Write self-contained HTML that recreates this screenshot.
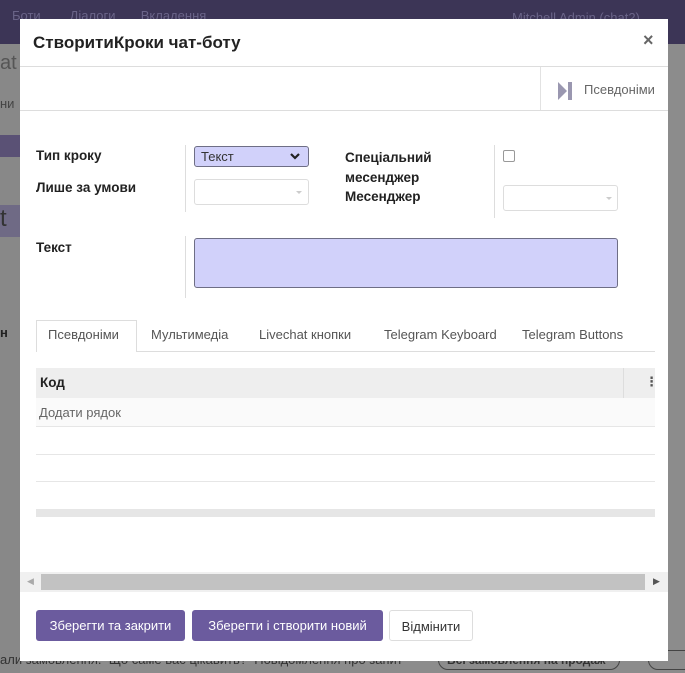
<!DOCTYPE html>
<html><head><meta charset="utf-8"><style>
*{box-sizing:border-box;margin:0;padding:0}
body{width:685px;height:673px;overflow:hidden;background:#8c8c8c;font-family:"Liberation Sans","DejaVu Sans",sans-serif;position:relative;font-size:13px;color:#222}
.a{position:absolute}
.nav{left:0;top:0;width:685px;height:44px;background:#3c3556}
.modal{left:20px;top:19px;width:648px;height:642px;background:#fff}
.b{font-weight:bold;font-size:13.5px;color:#222}
.btn{height:31px;top:610px;border-radius:3px;color:#fff;font-size:13.5px;line-height:31px;text-align:center;background:#6b5b9e}
.tab{top:327px;font-size:13.5px;color:#555}
.hl{height:1px;background:#e6e6e6}
</style></head><body>
<div class="a nav"></div>
<div class="a" style="left:12px;top:8px;color:#6a6488;font-size:13px">Боти&nbsp;&nbsp;&nbsp;&nbsp;&nbsp;&nbsp;&nbsp;&nbsp;Діалоги&nbsp;&nbsp;&nbsp;&nbsp;&nbsp;&nbsp;&nbsp;Вкладення</div>
<div class="a" style="left:512px;top:10px;color:#6a6488;font-size:13px">Mitchell Admin (chat2)</div>
<div class="a" style="left:0;top:44px;width:20px;height:629px;background:#888"></div>
<div class="a" style="left:0;top:52px;font-size:20px;color:#555">at</div>
<div class="a" style="left:0;top:96px;color:#444">ни</div>
<div class="a" style="left:0;top:135px;width:20px;height:22px;background:#5a5175"></div>
<div class="a" style="left:0;top:205px;width:20px;height:32px;background:#6f6a85;color:#333;font-size:24px">t</div>
<div class="a" style="left:0;top:325px;color:#222;font-weight:bold">н</div>
<div class="a" style="left:0;top:652px;color:#333">али замовлення.&nbsp; Що саме вас цікавить?&nbsp; Повідомлення про запит</div>
<div class="a" style="left:438px;top:650px;width:182px;height:20px;border:1px solid #444;border-radius:10px;color:#333;font-weight:bold;font-size:12px;padding-left:8px;line-height:18px">Всі замовлення на продаж</div>
<div class="a" style="left:648px;top:650px;width:50px;height:20px;border:1px solid #444;border-radius:10px"></div>
<div class="a modal"></div>
<div class="a" style="left:33px;top:33px;font-size:17px;font-weight:bold;color:#222">СтворитиКроки чат-боту</div>
<div class="a" style="left:643px;top:30px;font-size:18px;font-weight:bold;color:#666">×</div>
<div class="a hl" style="left:20px;top:66px;width:648px;background:#ddd"></div>
<div class="a hl" style="left:20px;top:110px;width:648px;background:#ddd"></div>
<div class="a" style="left:540px;top:67px;width:1px;height:43px;background:#e2e2e2"></div>
<svg class="a" style="left:557px;top:81px" width="16" height="20"><path d="M1 1L10 10L1 19Z" fill="#9a97b0"/><rect x="11" y="1" width="4" height="18" fill="#9a97b0"/></svg>
<div class="a" style="left:584px;top:82px;color:#666;font-size:13px">Псевдоніми</div>
<div class="a b" style="left:36px;top:148px">Тип кроку</div>
<div class="a b" style="left:36px;top:180px">Лише за умови</div>
<div class="a b" style="left:36px;top:240px">Текст</div>
<div class="a" style="left:185px;top:145px;width:1px;height:67px;background:#ddd"></div>
<div class="a" style="left:185px;top:236px;width:1px;height:62px;background:#ddd"></div>
<div class="a" style="left:194px;top:146px;width:115px;height:21px;background:#d1d1fa;border:1px solid #6e6e85;border-radius:3px;padding-left:6px;line-height:19px;color:#333">Текст<svg style="position:absolute;right:8px;top:6px" width="10" height="7"><path d="M1 1L5 5L9 1" stroke="#222" stroke-width="2.2" fill="none"/></svg></div>
<div class="a" style="left:194px;top:179px;width:115px;height:26px;border:1px solid #ddd;border-radius:3px"></div>
<div class="a" style="left:296px;top:191px;width:0;height:0;border-left:3px solid transparent;border-right:3px solid transparent;border-top:3px solid #ccc"></div>
<div class="a" style="left:194px;top:238px;width:424px;height:50px;background:#d1d1fa;border:1px solid #6e6e85;border-radius:3px"></div>
<div class="a b" style="left:345px;top:148px;line-height:19.5px">Спеціальний<br>месенджер<br>Месенджер</div>
<div class="a" style="left:494px;top:145px;width:1px;height:73px;background:#ddd"></div>
<div class="a" style="left:503px;top:150px;width:12px;height:12px;border:1px solid #999;border-radius:2px"></div>
<div class="a" style="left:503px;top:185px;width:115px;height:26px;border:1px solid #ddd;border-radius:3px"></div>
<div class="a" style="left:606px;top:197px;width:0;height:0;border-left:3px solid transparent;border-right:3px solid transparent;border-top:3px solid #ccc"></div>
<div class="a hl" style="left:36px;top:351px;width:619px;background:#ddd"></div>
<div class="a" style="left:36px;top:320px;width:101px;height:32px;border:1px solid #ddd;border-bottom:none;background:#fff"></div>
<div class="a tab" style="left:48px;font-size:13px">Псевдоніми</div>
<div class="a tab" style="left:151px;font-size:13px">Мультимедіа</div>
<div class="a tab" style="left:259px;font-size:13px">Livechat кнопки</div>
<div class="a tab" style="left:384px;font-size:13px">Telegram Keyboard</div>
<div class="a tab" style="left:522px;font-size:13px">Telegram Buttons</div>
<div class="a" style="left:36px;top:368px;width:619px;height:30px;background:#eee"></div>
<div class="a" style="left:623px;top:368px;width:1px;height:30px;background:#ddd"></div>
<div class="a b" style="left:40px;top:375px">Код</div>
<div class="a" style="left:645px;top:374px;font-weight:bold;color:#555">⋮</div>
<div class="a" style="left:36px;top:398px;width:619px;height:28px;background:#fafafa"></div>
<div class="a" style="left:39px;top:405px;color:#666">Додати рядок</div>
<div class="a hl" style="left:36px;top:426px;width:619px"></div>
<div class="a hl" style="left:36px;top:454px;width:619px"></div>
<div class="a hl" style="left:36px;top:481px;width:619px"></div>
<div class="a" style="left:36px;top:509px;width:619px;height:8px;background:#e6e6e6"></div>
<div class="a" style="left:20px;top:572px;width:648px;height:20px;background:#f0f0f0"></div>
<div class="a" style="left:41px;top:574px;width:604px;height:16px;background:#c2c2c2"></div>
<div class="a" style="left:27px;top:576px;font-size:9px;color:#aaa">◀</div>
<div class="a" style="left:653px;top:576px;font-size:9px;color:#555">▶</div>
<div class="a btn" style="left:36px;width:149px;font-size:13px">Зберегти та закрити</div>
<div class="a btn" style="left:192px;width:191px;font-size:13px">Зберегти і створити новий</div>
<div class="a btn" style="left:389px;width:84px;background:#fff;color:#333;border:1px solid #ddd;font-size:13px">Відмінити</div>
</body></html>
